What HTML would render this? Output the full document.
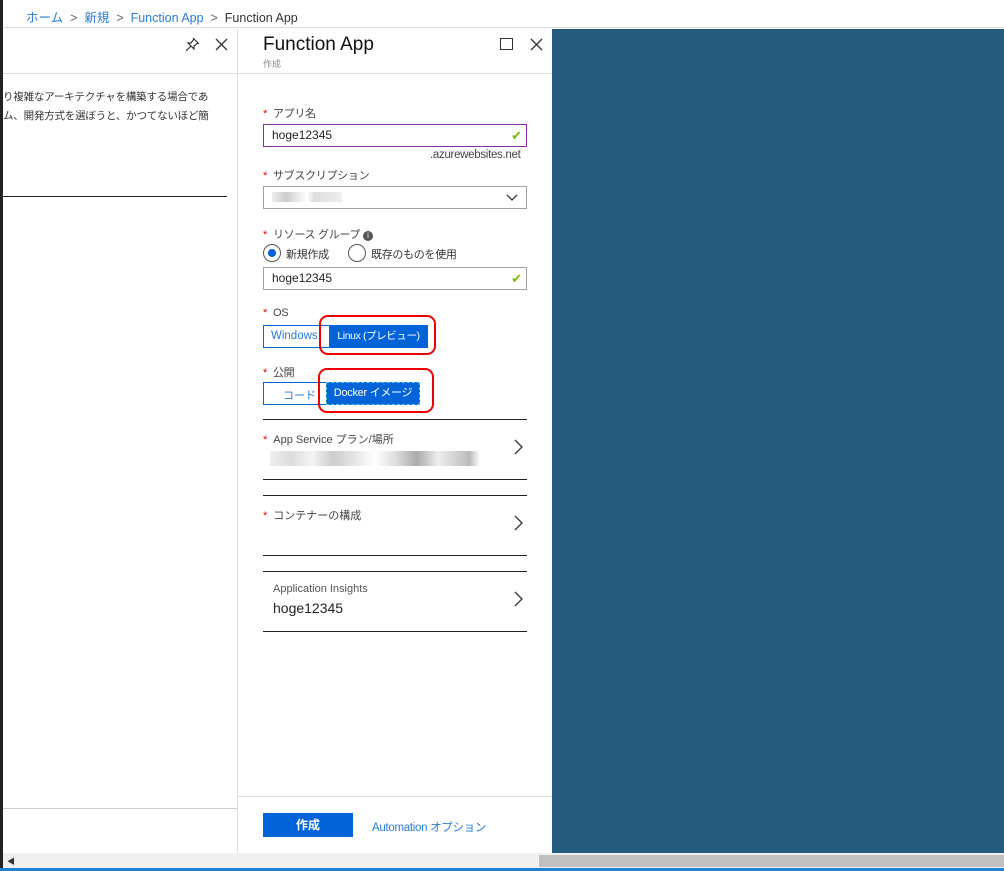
<!DOCTYPE html>
<html><head><meta charset="utf-8"><style>
*{margin:0;padding:0;box-sizing:border-box}
body{width:1004px;height:871px;position:relative;overflow:hidden;background:#fff;font-family:"Liberation Sans","Noto Sans CJK JP",sans-serif;font-size:12px;color:#333}
.a{position:absolute;white-space:nowrap}
.st{color:#e00;margin-right:6px}
.lbl{font-size:11px;color:#444;letter-spacing:-0.3px}
.inp{position:absolute;left:263px;width:264px;height:23px;border:1px solid #a0a0a0;padding-left:8px;line-height:21px;font-size:12px;color:#222}
.chk{position:absolute;right:4px;top:0;color:#7ab800;font-size:13px}
.hr{position:absolute;left:263px;width:264px;height:1px;background:#222}
.chev{position:absolute;left:514px}
</style></head><body>
<div class="a" style="left:0;top:0;width:3px;height:871px;background:#222"></div>
<div class="a" style="left:3px;top:0;width:1001px;height:28px;border-bottom:1px solid #ddd;background:#fff"></div>
<div class="a" style="left:26px;top:7px;font-size:12.5px;color:#333"><span style="color:#2b7bd3">ホーム</span> &nbsp;<span style="color:#666">&gt;</span>&nbsp; <span style="color:#2b7bd3">新規</span> &nbsp;<span style="color:#666">&gt;</span>&nbsp; <span style="color:#2b7bd3">Function App</span> &nbsp;<span style="color:#666">&gt;</span>&nbsp; Function App</div>
<!-- left blade -->
<div class="a" style="left:3px;top:73px;width:234px;height:1px;background:#ddd"></div>
<div class="a" style="left:237px;top:29px;width:1px;height:824px;background:#ddd"></div>
<svg class="a" style="left:184px;top:37px" width="16" height="16"><path d="M9 1L15 7M10 2L7 6L4 6L10 12L10 9L14 6M7 9L2 14" stroke="#333" fill="none" stroke-width="1.2"/></svg>
<svg class="a" style="left:215px;top:38px" width="13" height="13"><path d="M1 1L12 12M12 1L1 12" stroke="#333" stroke-width="1.3"/></svg>
<div class="a" style="left:3px;top:88px;width:230px;overflow:hidden;font-size:10.5px;line-height:19px;color:#333;letter-spacing:-0.2px">り複雑なアーキテクチャを構築する場合であ<br>ム、開発方式を選ぼうと、かつてないほど簡</div>
<div class="a" style="left:3px;top:196px;width:224px;height:1px;background:#222"></div>
<div class="a" style="left:3px;top:808px;width:234px;height:1px;background:#ccc"></div>
<!-- right blade -->
<div class="a" style="left:263px;top:34px;font-size:19px;color:#111">Function App</div>
<div class="a" style="left:263px;top:57px;font-size:9px;color:#888">作成</div>
<div class="a" style="left:500px;top:38px;width:13px;height:12px;border:1.3px solid #333"></div>
<svg class="a" style="left:530px;top:38px" width="13" height="13"><path d="M1 1L12 12M12 1L1 12" stroke="#333" stroke-width="1.3"/></svg>
<div class="a" style="left:238px;top:73px;width:314px;height:1px;background:#ddd"></div>

<div class="a lbl" style="left:263px;top:105px"><span class="st">*</span>アプリ名</div>
<div class="inp" style="top:124px;border-color:#8a2ba8">hoge12345<span class="chk">✔</span></div>
<div class="a" style="left:430px;top:149px;font-size:11.5px;color:#444;letter-spacing:-0.3px">.azurewebsites.net</div>
<div class="a lbl" style="left:263px;top:167px"><span class="st">*</span>サブスクリプション</div>
<div class="inp" style="top:186px"><span style="display:inline-block;margin-top:5px;width:70px;height:10px;background:linear-gradient(90deg,#eee,#ccc 20%,#eee 40%,#fff 50%,#ddd 60%,#eee)"></span>
<svg style="position:absolute;right:8px;top:7px" width="12" height="8"><path d="M1 1L6 6L11 1" stroke="#333" fill="none" stroke-width="1.3"/></svg></div>
<div class="a lbl" style="left:263px;top:226px"><span class="st">*</span>リソース グループ <span style="display:inline-block;width:10px;height:10px;border-radius:50%;background:#555;color:#fff;font-size:8px;text-align:center;line-height:10px">i</span></div>
<div class="a" style="left:263px;top:244px;width:18px;height:18px;border:1px solid #555;border-radius:50%"><div style="margin:4px;width:8px;height:8px;border-radius:50%;background:#0063d8"></div></div>
<div class="a lbl" style="left:286px;top:246px;color:#333">新規作成</div>
<div class="a" style="left:348px;top:244px;width:18px;height:18px;border:1px solid #555;border-radius:50%"></div>
<div class="a lbl" style="left:371px;top:246px;color:#333">既存のものを使用</div>
<div class="inp" style="top:267px">hoge12345<span class="chk">✔</span></div>

<div class="a lbl" style="left:263px;top:307px"><span class="st">*</span>OS</div>
<div class="a" style="left:263px;top:325px;width:165px;height:23px;border:1px solid #0063d8"></div>
<div class="a" style="left:271px;top:330px;color:#2b7bd3;font-size:11.5px">Windows</div>
<div class="a" style="left:329px;top:325px;width:99px;height:23px;background:#0063d8;color:#fff;text-align:center;line-height:23px;font-size:10.5px;letter-spacing:-0.4px">Linux (プレビュー)</div>
<div class="a" style="left:319px;top:315px;width:117px;height:40px;border:2px solid #e00;border-radius:9px"></div>

<div class="a lbl" style="left:263px;top:364px"><span class="st">*</span>公開</div>
<div class="a" style="left:263px;top:382px;width:157px;height:23px;border:1px solid #0063d8"></div>
<div class="a" style="left:283px;top:387px;color:#2b7bd3;font-size:11px">コード</div>
<div class="a" style="left:326px;top:382px;width:94px;height:23px;background:#0063d8;border:1px dashed #5cd;color:#fff;text-align:center;line-height:21px;font-size:11px;letter-spacing:-0.3px">Docker イメージ</div>
<div class="a" style="left:318px;top:368px;width:116px;height:45px;border:2px solid #e00;border-radius:9px"></div>

<div class="hr" style="top:419px"></div>
<div class="a" style="left:263px;top:431px;font-size:11px;color:#444"><span class="st">*</span>App Service プラン/場所</div>
<div class="a" style="left:270px;top:451px;width:210px;height:15px;background:linear-gradient(90deg,#eee,#ddd 10%,#f5f5f5 20%,#ccc 30%,#e5e5e5 40%,#fff 50%,#ddd 60%,#aaa 70%,#eee 80%,#bbb 95%,#fff)"></div>
<svg class="chev" style="top:439px" width="10" height="16"><path d="M1 1L8 8L1 15" stroke="#333" fill="none" stroke-width="1.3"/></svg>
<div class="hr" style="top:479px"></div>
<div class="hr" style="top:495px"></div>
<div class="a" style="left:263px;top:507px;font-size:11px;color:#444"><span class="st">*</span>コンテナーの構成</div>
<svg class="chev" style="top:515px" width="10" height="16"><path d="M1 1L8 8L1 15" stroke="#333" fill="none" stroke-width="1.3"/></svg>
<div class="hr" style="top:555px"></div>
<div class="hr" style="top:571px"></div>
<div class="a" style="left:273px;top:583px;font-size:11px;color:#555">Application Insights</div>
<div class="a" style="left:273px;top:600px;font-size:14px;color:#222">hoge12345</div>
<svg class="chev" style="top:591px" width="10" height="16"><path d="M1 1L8 8L1 15" stroke="#333" fill="none" stroke-width="1.3"/></svg>
<div class="hr" style="top:631px"></div>

<div class="a" style="left:238px;top:796px;width:314px;height:1px;background:#ddd"></div>
<div class="a" style="left:263px;top:813px;width:90px;height:24px;background:#0063d8;color:#fff;text-align:center;line-height:24px;font-weight:bold">作成</div>
<div class="a" style="left:372px;top:819px;color:#2b7bd3;font-size:11.5px;letter-spacing:-0.3px">Automation オプション</div>

<div class="a" style="left:552px;top:29px;width:452px;height:824px;background:#245b7e"></div>
<div class="a" style="left:3px;top:853px;width:1001px;height:15px;background:#f0f0f0"></div>
<div class="a" style="left:7px;top:856px;font-size:8px;color:#333">◀</div>
<div class="a" style="left:539px;top:855px;width:465px;height:12px;background:#c0c0c0"></div>
<div class="a" style="left:0;top:868px;width:1004px;height:3px;background:#1a82d8"></div>
</body></html>
